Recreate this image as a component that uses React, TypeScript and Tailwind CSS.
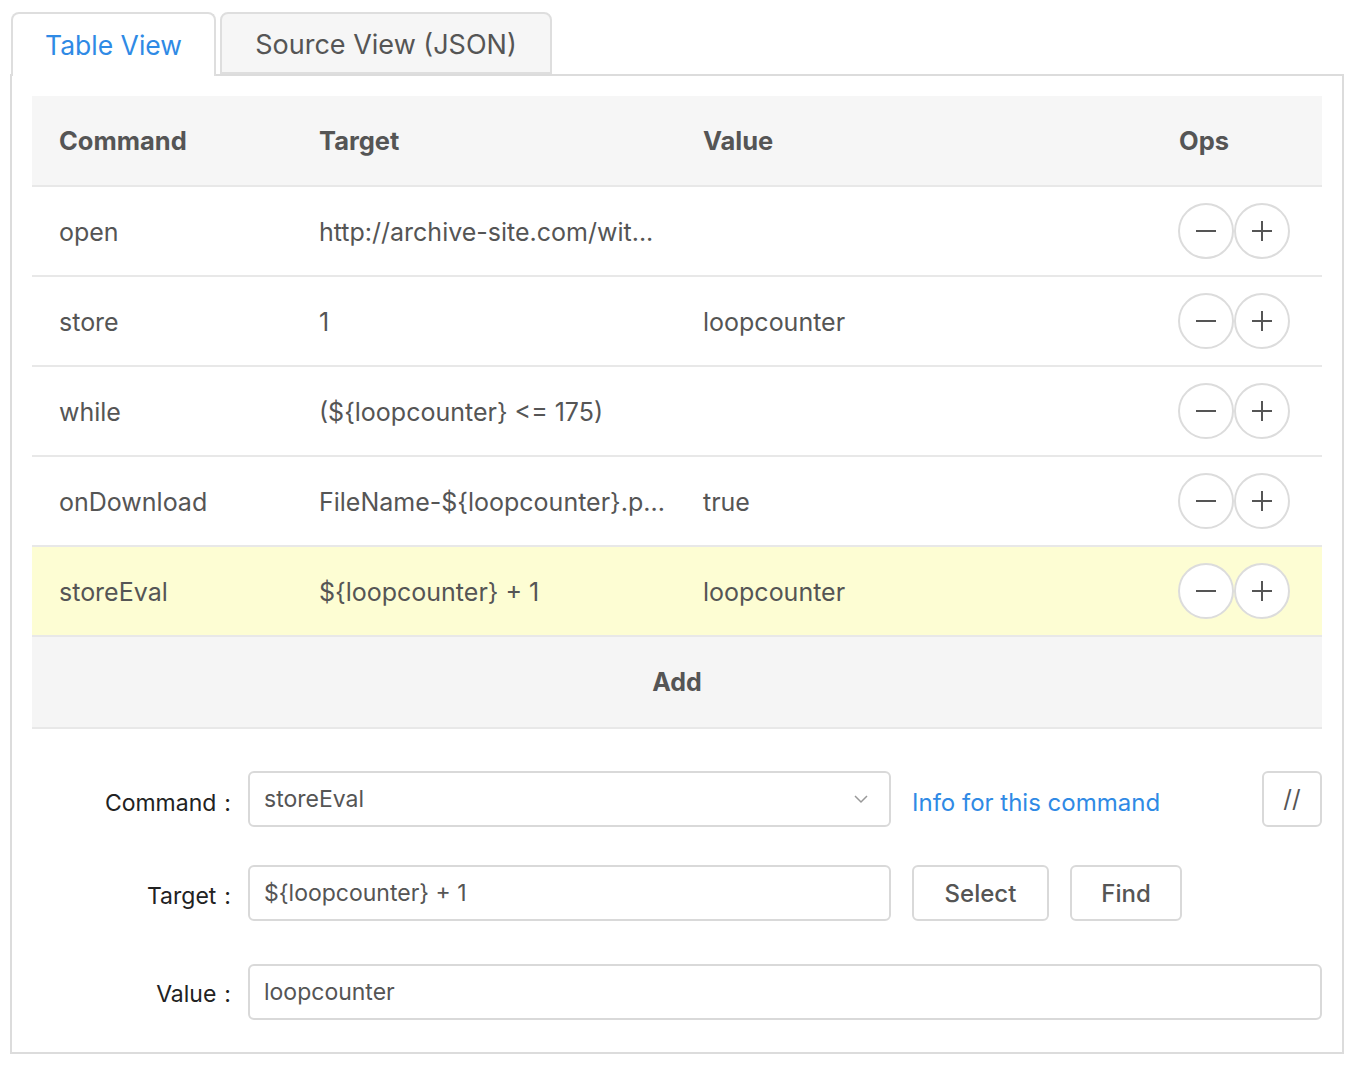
import React from "react";

const rows = [
  { cmd: "open", target: "http://archive-site.com/wit...", value: "" },
  { cmd: "store", target: "1", value: "loopcounter" },
  { cmd: "while", target: "(${loopcounter} <= 175)", value: "" },
  { cmd: "onDownload", target: "FileName-${loopcounter}.p...", value: "true" },
  { cmd: "storeEval", target: "${loopcounter} + 1", value: "loopcounter", active: true },
];

function CircleBtn({ kind }: { kind: "minus" | "plus" }) {
  return (
    <button className="w-[56px] h-[56px] rounded-full border-2 border-[#dcdcdc] bg-white flex items-center justify-center">
      <svg width="22" height="22" viewBox="0 0 22 22">
        <path d="M1 11h20" stroke="#555" strokeWidth="2" />
        {kind === "plus" && <path d="M11 1v20" stroke="#555" strokeWidth="2" />}
      </svg>
    </button>
  );
}

export default function App() {
  return (
    <div className="w-[1358px] h-[1074px] bg-white pt-[12px] pl-[10px] text-[#555]" style={{ fontFamily: "Inter, 'Noto Sans', sans-serif" }}>
      {/* tabs */}
      <div className="flex items-end gap-[4px] pl-[1px] relative z-10">
        <div className="w-[205px] h-[64px] border-2 border-b-0 border-[#dedede] rounded-t-[8px] bg-white flex items-center justify-center pt-[2px] text-[26.5px] text-[#2f8ae5] -mb-[2px]">
          Table View
        </div>
        <div className="w-[332px] h-[62px] border-2 border-[#dedede] rounded-t-[8px] bg-[#f6f6f6] flex items-center justify-center pt-[4px] text-[27px] text-[#555]">
          Source View (JSON)
        </div>
      </div>

      {/* content */}
      <div className="w-[1334px] h-[980px] border-2 border-t-2 border-[#dcdcdc] pt-[20px] px-[20px]">
        <div className="w-[1290px]">
          <div className="flex items-center h-[91px] pt-[2px] bg-[#f6f6f6] border-b-2 border-[#e8e8e8] font-bold text-[25.5px] text-[#555]">
            <div className="w-[287px] pl-[27px]">Command</div>
            <div className="w-[384px]">Target</div>
            <div className="w-[476px]">Value</div>
            <div>Ops</div>
          </div>
          {rows.map((r, i) => (
            <div
              key={i}
              className={`flex items-center h-[90px] border-b-2 border-[#e8e8e8] text-[25px] ${r.active ? "bg-[#fdfdd3]" : "bg-white"}`}
            >
              <div className="w-[287px] pl-[27px] pt-[3px]">{r.cmd}</div>
              <div className="w-[384px] pt-[3px]">{r.target}</div>
              <div className="w-[475px] pt-[3px]">{r.value}</div>
              <div className="flex">
                <CircleBtn kind="minus" />
                <CircleBtn kind="plus" />
              </div>
            </div>
          ))}
          <div className="h-[92px] pt-[2px] bg-[#f5f5f5] border-b-2 border-[#e8e8e8] flex items-center justify-center font-bold text-[25px] text-[#555]">
            Add
          </div>

          {/* form */}
          <div className="mt-[42px] flex flex-col text-[23px]">
            <div className="flex items-center">
              <div className="w-[199px] text-right text-[#222] mr-[17px] pt-[8px]">Command<span className="ml-[8px]">:</span></div>
              <div className="w-[643px] h-[56px] border-2 border-[#d9d9d9] rounded-[6px] flex items-center justify-between px-[14px] text-[#555]">
                <span>storeEval</span>
                <svg width="16" height="10" viewBox="0 0 16 10" className="mr-[6px]">
                  <path d="M2 2l6 6 6-6" fill="none" stroke="#999" strokeWidth="1.5" />
                </svg>
              </div>
              <a className="ml-[21px] text-[#2f8ae5] text-[24px] pt-[8px]">Info for this command</a>
              <button className="ml-auto w-[60px] h-[56px] border-2 border-[#d9d9d9] rounded-[6px] text-[24px] text-[#555]">//</button>
            </div>
            <div className="flex items-center mt-[38px]">
              <div className="w-[199px] text-right text-[#222] mr-[17px] pt-[6px]">Target<span className="ml-[8px]">:</span></div>
              <div className="w-[643px] h-[56px] border-2 border-[#d9d9d9] rounded-[6px] flex items-center px-[14px] text-[#555]">
                {"${loopcounter} + 1"}
              </div>
              <button className="ml-[21px] w-[137px] h-[56px] border-2 border-[#d9d9d9] rounded-[6px] text-[#555] text-[24px] font-medium pt-[2px]">Select</button>
              <button className="ml-[21px] w-[112px] h-[56px] border-2 border-[#d9d9d9] rounded-[6px] text-[#555] text-[24px] font-medium pt-[2px]">Find</button>
            </div>
            <div className="flex items-center mt-[43px]">
              <div className="w-[199px] text-right text-[#222] mr-[17px] pt-[4px]">Value<span className="ml-[8px]">:</span></div>
              <div className="flex-1 h-[56px] border-2 border-[#d9d9d9] rounded-[6px] flex items-center px-[14px] text-[#555]">
                loopcounter
              </div>
            </div>
          </div>
        </div>
      </div>
    </div>
  );
}
